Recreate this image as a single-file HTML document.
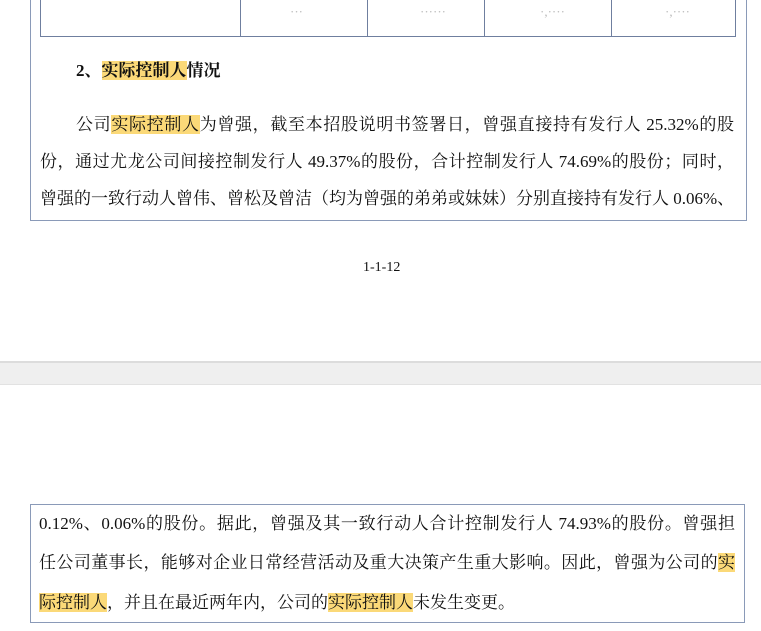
<!DOCTYPE html>
<html><head><meta charset="utf-8"><style>
body{margin:0;width:761px;height:631px;background:#fff;position:relative;overflow:hidden;font-family:"Liberation Serif","Noto Serif CJK SC",serif;color:#111;}
.abs{position:absolute}
.ln{position:absolute;font-size:17px;height:24px;line-height:24px;text-align:justify;text-align-last:justify;white-space:nowrap;}
.hl{background:#fbd978;}
.cell{position:absolute;top:4px;font-size:13px;color:#bbb;}
</style></head><body>
<div class="abs" style="left:30px;top:-2px;width:715px;height:222px;border:1px solid #8a9ab8;border-top:none"></div>
<div class="abs" style="left:40px;top:-2px;width:694px;height:38px;border:1px solid #6f7f9f;border-top:none"></div>
<div class="abs" style="left:240px;top:0;width:1px;height:37px;background:#6f7f9f"></div>
<div class="abs" style="left:367px;top:0;width:1px;height:37px;background:#6f7f9f"></div>
<div class="abs" style="left:484px;top:0;width:1px;height:37px;background:#6f7f9f"></div>
<div class="abs" style="left:611px;top:0;width:1px;height:37px;background:#6f7f9f"></div>
<div class="cell" style="left:290px">···</div>
<div class="cell" style="left:420px">······</div>
<div class="cell" style="left:540px">·,····</div>
<div class="cell" style="left:665px">·,····</div>
<div class="ln" style="left:76px;top:59px;font-weight:bold;text-align:left;text-align-last:left">2、<span class="hl">实际控制人</span>情况</div>
<div class="ln" style="left:76px;top:113px;width:658px">公司<span class="hl">实际控制人</span>为曾强，截至本招股说明书签署日，曾强直接持有发行人 25.32%的股</div>
<div class="ln" style="left:40px;top:150px;width:694px">份，通过尤龙公司间接控制发行人 49.37%的股份，合计控制发行人 74.69%的股份；同时，</div>
<div class="ln" style="left:40px;top:187px;width:694px">曾强的一致行动人曾伟、曾松及曾洁（均为曾强的弟弟或妹妹）分别直接持有发行人 0.06%、</div>
<div class="abs" style="left:363px;top:260px;font-size:14px">1-1-12</div>
<div class="abs" style="left:0;top:361px;width:761px;height:21px;background:#efefef;border-top:2px solid #dcdcdc;border-bottom:1px solid #e2e2e2"></div>
<div class="abs" style="left:30px;top:504px;width:713px;height:117px;border:1px solid #8a9ab8"></div>
<div class="ln" style="left:39px;top:512px;width:696px">0.12%、0.06%的股份。据此，曾强及其一致行动人合计控制发行人 74.93%的股份。曾强担</div>
<div class="ln" style="left:39px;top:551px;width:696px">任公司董事长，能够对企业日常经营活动及重大决策产生重大影响。因此，曾强为公司的<span class="hl">实</span></div>
<div class="ln" style="left:39px;top:591px;text-align:left;text-align-last:left"><span class="hl">际控制人</span>，并且在最近两年内，公司的<span class="hl">实际控制人</span>未发生变更。</div>
</body></html>
